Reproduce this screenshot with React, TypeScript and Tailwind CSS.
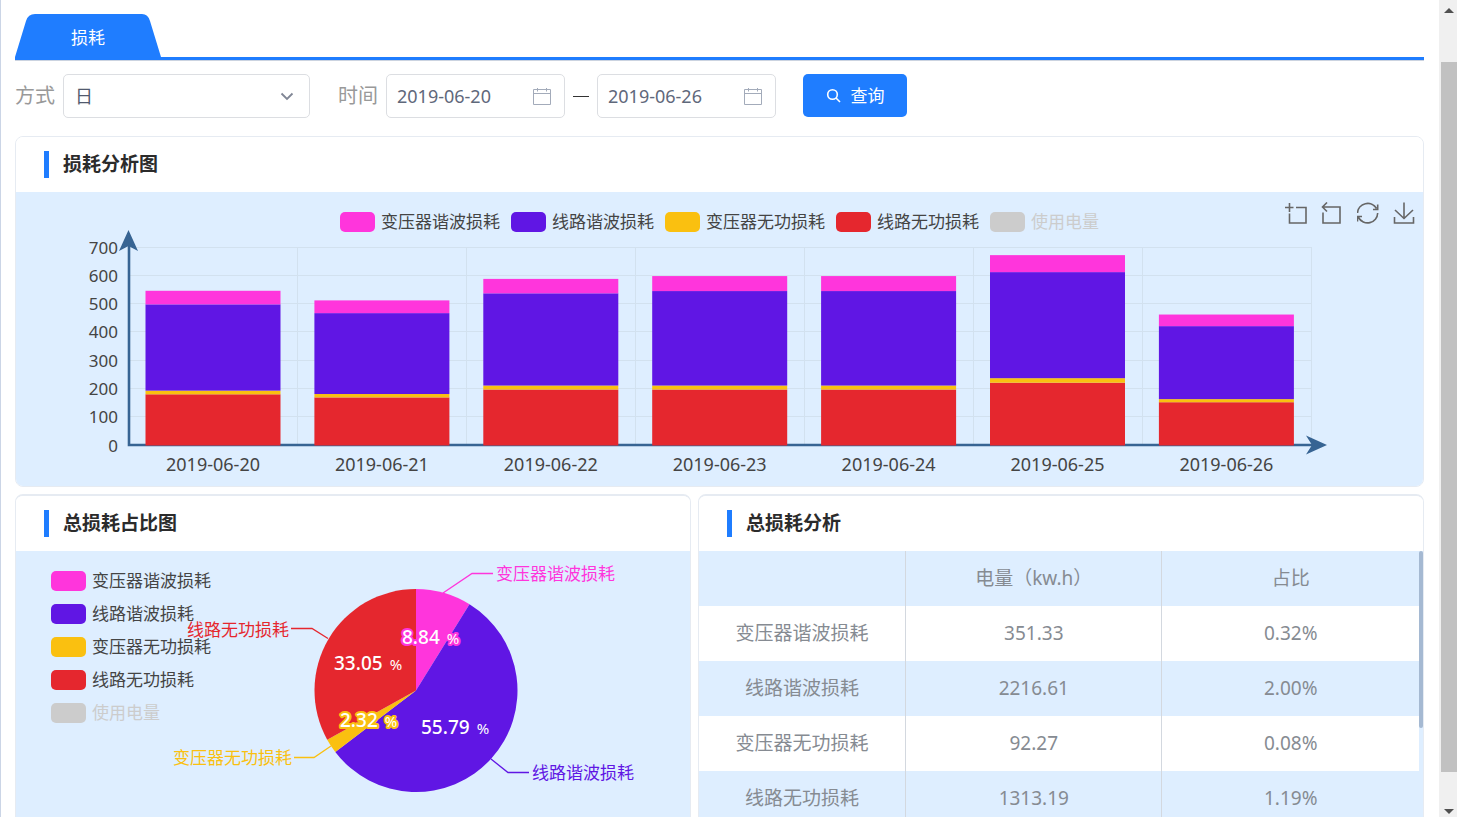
import React, { ReactNode, useState } from "react";

interface Series {
  key: string;
  name: string;
  color: string;
  disabled?: boolean;
}

const SERIES: Series[] = [
  { key: "transHarmonic", name: "变压器谐波损耗", color: "#ff35dc" },
  { key: "lineHarmonic", name: "线路谐波损耗", color: "#6016e4" },
  { key: "transReactive", name: "变压器无功损耗", color: "#fac010" },
  { key: "lineReactive", name: "线路无功损耗", color: "#e5272e" },
  { key: "usage", name: "使用电量", color: "#cccccc", disabled: true },
];

// stacked bottom to top: 线路无功, 变压器无功, 线路谐波, 变压器谐波
const DAYS = [
  { date: "2019-06-20", values: [181, 13, 305, 48] },
  { date: "2019-06-21", values: [170, 12, 286, 45] },
  { date: "2019-06-22", values: [198, 14, 326, 51] },
  { date: "2019-06-23", values: [198, 14, 334, 53] },
  { date: "2019-06-24", values: [198, 14, 334, 53] },
  { date: "2019-06-25", values: [222, 16, 375, 60] },
  { date: "2019-06-26", values: [153, 11, 258, 41] },
];
const STACK_COLORS = ["#e5272e", "#fac010", "#6016e4", "#ff35dc"];

const ROWS = [
  ["变压器谐波损耗", "351.33", "0.32%"],
  ["线路谐波损耗", "2216.61", "2.00%"],
  ["变压器无功损耗", "92.27", "0.08%"],
  ["线路无功损耗", "1313.19", "1.19%"],
];

interface PanelProps {
  title: string;
  className?: string;
  children: ReactNode;
}

const Panel: React.FC<PanelProps> = ({ title, className = "", children }) => (
  <section className={`overflow-hidden rounded-lg border border-[#e6ebf2] ${className}`}>
    <header className="flex h-[55px] items-center gap-[14px] bg-white pl-7">
      <span className="h-[27px] w-[5px] bg-[#1f7dff]" />
      <h2 className="text-[19px] font-bold text-[#2b2b2b]">{title}</h2>
    </header>
    {children}
  </section>
);

const LegendItem: React.FC<{ item: Series }> = ({ item }) => (
  <li>
    <button
      className={`flex items-center gap-[6px] text-[17px] leading-5 whitespace-nowrap ${
        item.disabled ? "text-[#cccccc]" : "text-[#444444]"
      }`}
    >
      <span className="h-[20px] w-[35px] rounded-[5px]" style={{ background: item.color }} />
      {item.name}
    </button>
  </li>
);

const TOOLS = [
  { label: "区域缩放", d: "M0 5.5h8.5M4.5 1v9M11 5.5h10v15.5H4.5V11.5" },
  { label: "区域缩放还原", d: "M6 0.5L1.5 5l4.5 4.5M1.5 5h17.5v16H2V10.5" },
  {
    label: "还原",
    d: "M0.5 11A10.2 10.2 0 0 1 19.5 6.5M20.7 2.5V7.5H16M20.7 11A10.2 10.2 0 0 1 1.5 15.5M0.5 19.5V14.5H5",
  },
  { label: "保存为图片", d: "M11 0.5V16M2 8l9 8.5L20 8M1.5 15v6h19v-6" },
];

const Toolbox = () => (
  <div className="absolute top-[10px] right-2 flex gap-[14px]">
    {TOOLS.map((tool) => (
      <button key={tool.label} aria-label={tool.label}>
        <svg width="22" height="22" viewBox="0 0 22 22" fill="none" stroke="#666" strokeWidth="1.6">
          <path d={tool.d} />
        </svg>
      </button>
    ))}
  </div>
);

const AXIS = "#376493";
const X0 = 113;
const Y0 = 213.5;
const STEP = 169;
const UNIT = 198 / 700;

const BarChart = () => (
  <svg viewBox="0 0 1407 254" className="block w-full overflow-visible">
    <g stroke="#d2e1ef" strokeWidth="1">
      {[100, 200, 300, 400, 500, 600, 700].map((v) => (
        <line key={v} x1={X0} x2={X0 + STEP * 7} y1={Math.round(Y0 - v * UNIT) - 0.5} y2={Math.round(Y0 - v * UNIT) - 0.5} />
      ))}
      {[1, 2, 3, 4, 5, 6, 7].map((i) => (
        <line key={i} x1={X0 + i * STEP - 0.5} x2={X0 + i * STEP - 0.5} y1="15" y2={Y0} />
      ))}
    </g>
    <g fill="#444" fontSize="17" textAnchor="end">
      {[0, 100, 200, 300, 400, 500, 600, 700].map((v) => (
        <text key={v} x="102" y={Y0 - v * UNIT + 6}>
          {v}
        </text>
      ))}
    </g>
    <path d={`M${X0} 14V${Y0 - 0.5}H1297`} fill="none" stroke={AXIS} strokeWidth="2.6" />
    <path d="M112.5 -2L122 19L112.5 14L103 19Z" fill={AXIS} />
    <path d="M1311 213L1290 222.5L1296 213L1290 203.5Z" fill={AXIS} />
    {DAYS.map((day, i) => {
      let sum = 0;
      const x = X0 + i * 168.9 + 16.5;
      return (
        <g key={day.date}>
          {day.values.map((v, j) => {
            sum += v;
            return <rect key={j} x={x} y={Y0 - sum * UNIT} width="135" height={v * UNIT} fill={STACK_COLORS[j]} />;
          })}
          <text x={x + 67.5} y="239" fill="#444" fontSize="18" textAnchor="middle">
            {day.date}
          </text>
        </g>
      );
    })}
  </svg>
);

const PIE = [
  { name: "变压器谐波损耗", value: 8.84, color: "#ff35dc", line: "M427 42L456 22.5H477", tx: 480, ty: 29, px: 386, py: 93, outline: true },
  { name: "线路谐波损耗", value: 55.79, color: "#6016e4", line: "M475 208L492 221.5H513", tx: 516, ty: 228, px: 405, py: 183 },
  { name: "变压器无功损耗", value: 2.32, color: "#fac010", line: "M315 195L298 206.5H278", tx: 276, ty: 213, px: 324, py: 176, outline: true, left: true },
  { name: "线路无功损耗", value: 33.05, color: "#e5272e", line: "M312 87.5L296 77.5H275", tx: 273, ty: 85, px: 318, py: 119, left: true },
];
const CX = 400;
const CY = 139.5;
const R = 101.5;

const slicePath = (from: number, to: number) => {
  const a = from * Math.PI * 2;
  const b = to * Math.PI * 2;
  const large = to - from > 0.5 ? 1 : 0;
  return `M${CX} ${CY}L${CX + R * Math.sin(a)} ${CY - R * Math.cos(a)}A${R} ${R} 0 ${large} 1 ${CX + R * Math.sin(b)} ${CY - R * Math.cos(b)}Z`;
};

const PieChart = () => {
  let acc = 0;
  return (
    <svg viewBox="0 0 674 294" className="block w-full">
      {PIE.map((p) => {
        const from = acc;
        acc += p.value / 100;
        return (
          <g key={p.name}>
            <path d={slicePath(from, acc)} fill={p.color} />
            <path d={p.line} fill="none" stroke={p.color} strokeWidth="1.3" />
            <text x={p.tx} y={p.ty} fill={p.color} fontSize="17" textAnchor={p.left ? "end" : "start"}>
              {p.name}
            </text>
          </g>
        );
      })}
      {PIE.map((p) => (
        <text
          key={p.name}
          x={p.px}
          y={p.py}
          fill="#fff"
          fontSize="19"
          fontWeight="500"
          stroke={p.outline ? p.color : "none"}
          strokeWidth="4"
          strokeLinejoin="round"
          paintOrder="stroke"
        >
          {p.value}
          <tspan dx="7" fontSize="15" fontWeight="400">
            %
          </tspan>
        </text>
      ))}
    </svg>
  );
};

const DateInput: React.FC<{ id: string; label: string; initial: string }> = ({ id, label, initial }) => {
  const [value, setValue] = useState(initial);
  return (
    <div className="relative">
      <input
        id={id}
        aria-label={label}
        value={value}
        onChange={(e) => setValue(e.target.value)}
        className="h-11 w-[179px] rounded-[5px] border border-[#dcdee2] bg-white pl-[10px] text-[18px] text-[#5f687b] outline-none"
      />
      <svg
        className="pointer-events-none absolute top-[14px] right-[14px]"
        width="18"
        height="18"
        viewBox="0 0 18 18"
        fill="none"
        stroke="#a3abba"
        strokeWidth="1"
      >
        <path d="M0.5 1.5h17v15h-17zM0.5 5.5h17M4.5 0v3.5M13.5 0v3.5" />
      </svg>
    </div>
  );
};

const FilterBar = () => (
  <form className="mt-[13px] flex items-center" onSubmit={(e) => e.preventDefault()}>
    <label htmlFor="mode" className="mr-2 text-[20px] text-[#999999]">
      方式
    </label>
    <div className="relative mr-7">
      <select
        id="mode"
        className="h-11 w-[247px] appearance-none rounded-[5px] border border-[#dcdee2] bg-white pl-[11px] text-[18px] text-[#515a6e] outline-none"
      >
        <option>日</option>
        <option>月</option>
        <option>年</option>
      </select>
      <svg
        className="pointer-events-none absolute top-[18px] right-4"
        width="14"
        height="9"
        viewBox="0 0 14 9"
        fill="none"
        stroke="#808695"
        strokeWidth="1.8"
      >
        <path d="M1.5 1.5L7 7L12.5 1.5" />
      </svg>
    </div>
    <label htmlFor="start" className="mr-2 text-[20px] text-[#999999]">
      时间
    </label>
    <DateInput id="start" label="开始时间" initial="2019-06-20" />
    <span className="mx-2 h-px w-4 bg-[#333333]" />
    <DateInput id="end" label="结束时间" initial="2019-06-26" />
    <button className="ml-[27px] flex h-[43px] w-[104px] items-center justify-center gap-[10px] self-start rounded-[5px] bg-[#1f7dff] text-[17px] text-white">
      <svg width="15" height="15" viewBox="0 0 15 15" fill="none" stroke="currentColor" strokeWidth="1.6">
        <circle cx="6.5" cy="6.5" r="4.8" />
        <path d="M10 10l4 4" />
      </svg>
      查询
    </button>
  </form>
);

const LossTable = () => (
  <div className="flex bg-[#deeeff]">
    <table className="w-full table-fixed border-collapse text-center text-[19px] text-[#868b92]">
      <colgroup>
        <col className="w-[28.7%]" />
        <col className="w-[35.6%]" />
        <col />
      </colgroup>
      <thead>
        <tr className="h-[55px] bg-[#deeeff]">
          <th className="border-r border-[#d3d8df] font-normal" aria-label="名称" />
          <th className="border-r border-[#d3d8df] font-normal">电量（kw.h）</th>
          <th className="font-normal">占比</th>
        </tr>
      </thead>
      <tbody>
        {ROWS.map(([name, power, ratio]) => (
          <tr key={name} className="h-[55px] odd:bg-white even:bg-[#deeeff]">
            <td className="border-r border-[#d3d8df]">{name}</td>
            <td className="border-r border-[#d3d8df]">{power}</td>
            <td>{ratio}</td>
          </tr>
        ))}
      </tbody>
    </table>
    <div className="w-1 shrink-0">
      <div className="h-[177px] rounded-sm bg-[#a5b9d2]" />
    </div>
  </div>
);

const PageScrollbar = () => (
  <div className="flex w-[18px] shrink-0 flex-col items-end bg-[#f0f0f0]">
    <div className="flex h-[62px] w-4 justify-center pt-2">
      <svg width="10" height="5" viewBox="0 0 10 5" fill="#505050">
        <path d="M5 0L10 5H0Z" />
      </svg>
    </div>
    <div className="w-4 flex-1 bg-[#c1c1c1]" />
    <div className="flex h-[45px] w-4 items-end justify-center pb-[3px]">
      <svg width="10" height="5" viewBox="0 0 10 5" fill="#505050">
        <path d="M0 0H10L5 5Z" />
      </svg>
    </div>
  </div>
);

export default function App() {
  return (
    <div className="flex h-screen overflow-hidden border-l border-[#cbd5e6] bg-white font-['Noto_Sans','Noto_Sans_CJK_SC',sans-serif]">
      <main className="min-w-0 flex-1 overflow-hidden pt-[14px] pr-[15px] pl-[14px]">
        <nav className="border-b border-[#cbd3e0]">
          <div className="border-b-3 border-[#1f7dff]">
            <button className="relative block h-[43px] w-[146px] pt-1 text-[17px] text-white">
              <svg className="absolute inset-0" width="146" height="43" viewBox="0 0 146 43" fill="#1f7dff">
                <path d="M0 43L11 7Q13 0 20 0H127Q133 0 135 7L146 43Z" />
              </svg>
              <span className="relative">损耗</span>
            </button>
          </div>
        </nav>

        <FilterBar />

        <Panel title="损耗分析图" className="mt-[18px]">
          <div className="relative bg-[#deeeff] pt-5">
            <ul className="flex justify-center gap-[11px]">
              {SERIES.map((item) => (
                <LegendItem key={item.key} item={item} />
              ))}
            </ul>
            <Toolbox />
            <BarChart />
          </div>
        </Panel>

        <div className="mt-[7px] grid grid-cols-[676fr_726fr] gap-[7px]">
          <Panel title="总损耗占比图" className="border-t-2">
            <div className="relative bg-[#deeeff]">
              <ul className="absolute top-5 left-[35px] flex flex-col gap-[13px]">
                {SERIES.map((item) => (
                  <LegendItem key={item.key} item={item} />
                ))}
              </ul>
              <PieChart />
            </div>
          </Panel>
          <Panel title="总损耗分析" className="border-t-2">
            <LossTable />
          </Panel>
        </div>
      </main>
      <PageScrollbar />
    </div>
  );
}
